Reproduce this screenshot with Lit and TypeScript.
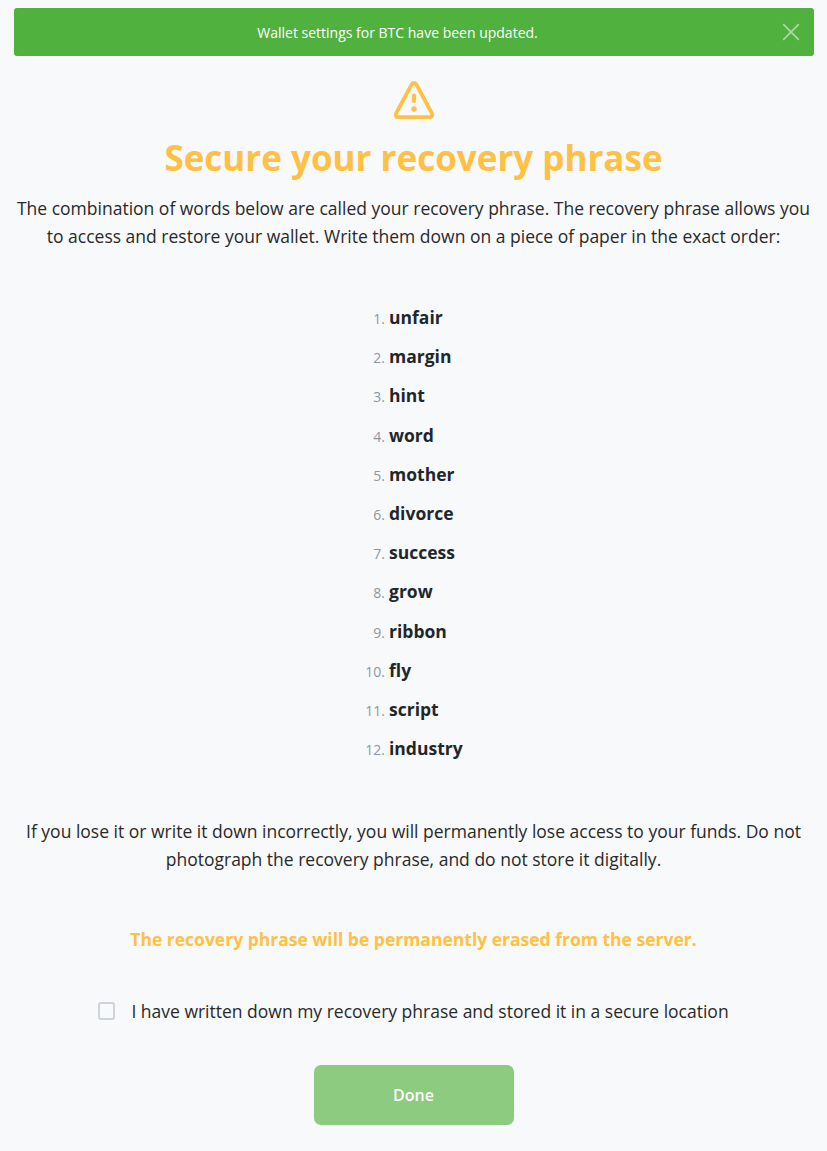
import { LitElement, html, css } from "lit";
import { customElement } from "lit/decorators.js";

const WORDS = ["unfair", "margin", "hint", "word", "mother", "divorce", "success", "grow", "ribbon", "fly", "script", "industry"];

@customElement("app-root")
export class AppRoot extends LitElement {
  static styles = css`
    :host {
      display: block;
      box-sizing: border-box;
      min-height: 1151px;
      padding: 8px 13px 0 14px;
      background: #f8f9fb;
      color: #292929;
      font-family: "Open Sans", "Noto Sans", sans-serif;
      font-size: 14px;
      line-height: 1.6;
      text-align: center;
    }
    .alert {
      display: grid;
      grid-template-columns: 1fr 46px;
      align-items: center;
      height: 48px;
      padding-left: 13px;
      box-sizing: border-box;
      border-radius: 3px;
      background: #51b13e;
      color: #fff;
    }
    .message {
      padding-top: 2px;
    }
    .close {
      display: flex;
      justify-content: center;
      padding: 0;
      border: 0;
      background: none;
      color: #fff;
      opacity: 0.5;
    }
    .warning {
      display: block;
      margin: 24px auto 0;
      color: #ffc043;
    }
    .title {
      margin: 14px 0 0;
      padding-right: 1px;
      color: #ffc043;
      font-size: 35px;
      font-weight: 700;
      line-height: 48px;
    }
    .lead {
      margin: 12px 0 0;
      padding-right: 1px;
      font-size: 17.5px;
      line-height: 28px;
    }
    .words {
      display: grid;
      grid-template-columns: auto auto;
      grid-auto-rows: 39.2px;
      align-items: baseline;
      justify-content: center;
      column-gap: 4px;
      margin: 53px 0 0;
      text-align: left;
    }
    .num {
      color: #8f979e;
      text-align: right;
    }
    .word {
      color: #1f272c;
      font-size: 17.5px;
      font-weight: 700;
      line-height: 28px;
    }
    .notice {
      margin-top: 44px;
    }
    .erased {
      margin-top: 52px;
      color: #ffc043;
      font-weight: 700;
    }
    .confirm {
      display: flex;
      align-items: center;
      justify-content: center;
      gap: 16px;
      margin-top: 44px;
      padding-right: 1px;
      font-size: 17.5px;
      line-height: 28px;
    }
    .check {
      appearance: none;
      box-sizing: border-box;
      width: 17px;
      height: 18px;
      margin: 0;
      border: 2px solid #ced4da;
      border-radius: 3px;
      background: #f8f9fb;
    }
    .done {
      width: 200px;
      height: 60px;
      margin-top: 40px;
      padding: 0 1px 0 0;
      border: 0;
      border-radius: 7px;
      background: #8ccb80;
      color: #fff;
      font: 600 16px/24px "Open Sans", "Noto Sans", sans-serif;
    }
  `;

  render() {
    return html`
      <div class="alert" role="alert">
        <span class="message">Wallet settings for BTC have been updated.</span>
        <button class="close" aria-label="Close">
          <svg width="18" height="18" viewBox="0 0 18 18" fill="none" stroke="currentColor" stroke-width="1.8" stroke-linecap="round">
            <path d="M1.7 1.7 16.3 16.3M16.3 1.7 1.7 16.3" />
          </svg>
        </button>
      </div>
      <svg class="warning" width="42" height="40" viewBox="0 0 42 40" fill="none" stroke="currentColor" stroke-width="3.8" stroke-linejoin="round" stroke-linecap="round">
        <path d="M18.8 4.2 3.2 33.2Q1.7 37.2 5.2 37.2H36.8Q40.3 37.2 38.8 33.2L23.2 4.2Q21 1.4 18.8 4.2Z" />
        <path d="M21 15.5V21" stroke-width="4.2" />
        <circle cx="21" cy="29" r="2.7" fill="currentColor" stroke="none" />
      </svg>
      <h1 class="title">Secure your recovery phrase</h1>
      <p class="lead">
        The combination of words below are called your recovery phrase. The recovery phrase allows you to access and
        restore your wallet. Write them down on a piece of paper in the exact order:
      </p>
      <div class="words">
        ${WORDS.map((word, i) => html`<span class="num">${i + 1}.</span><span class="word">${word}</span>`)}
      </div>
      <p class="lead notice">
        If you lose it or write it down incorrectly, you will permanently lose access to your funds. Do not photograph
        the recovery phrase, and do not store it digitally.
      </p>
      <p class="lead erased">The recovery phrase will be permanently erased from the server.</p>
      <label class="confirm">
        <input class="check" type="checkbox" />
        <span>I have written down my recovery phrase and stored it in a secure location</span>
      </label>
      <button class="done">Done</button>
    `;
  }
}
